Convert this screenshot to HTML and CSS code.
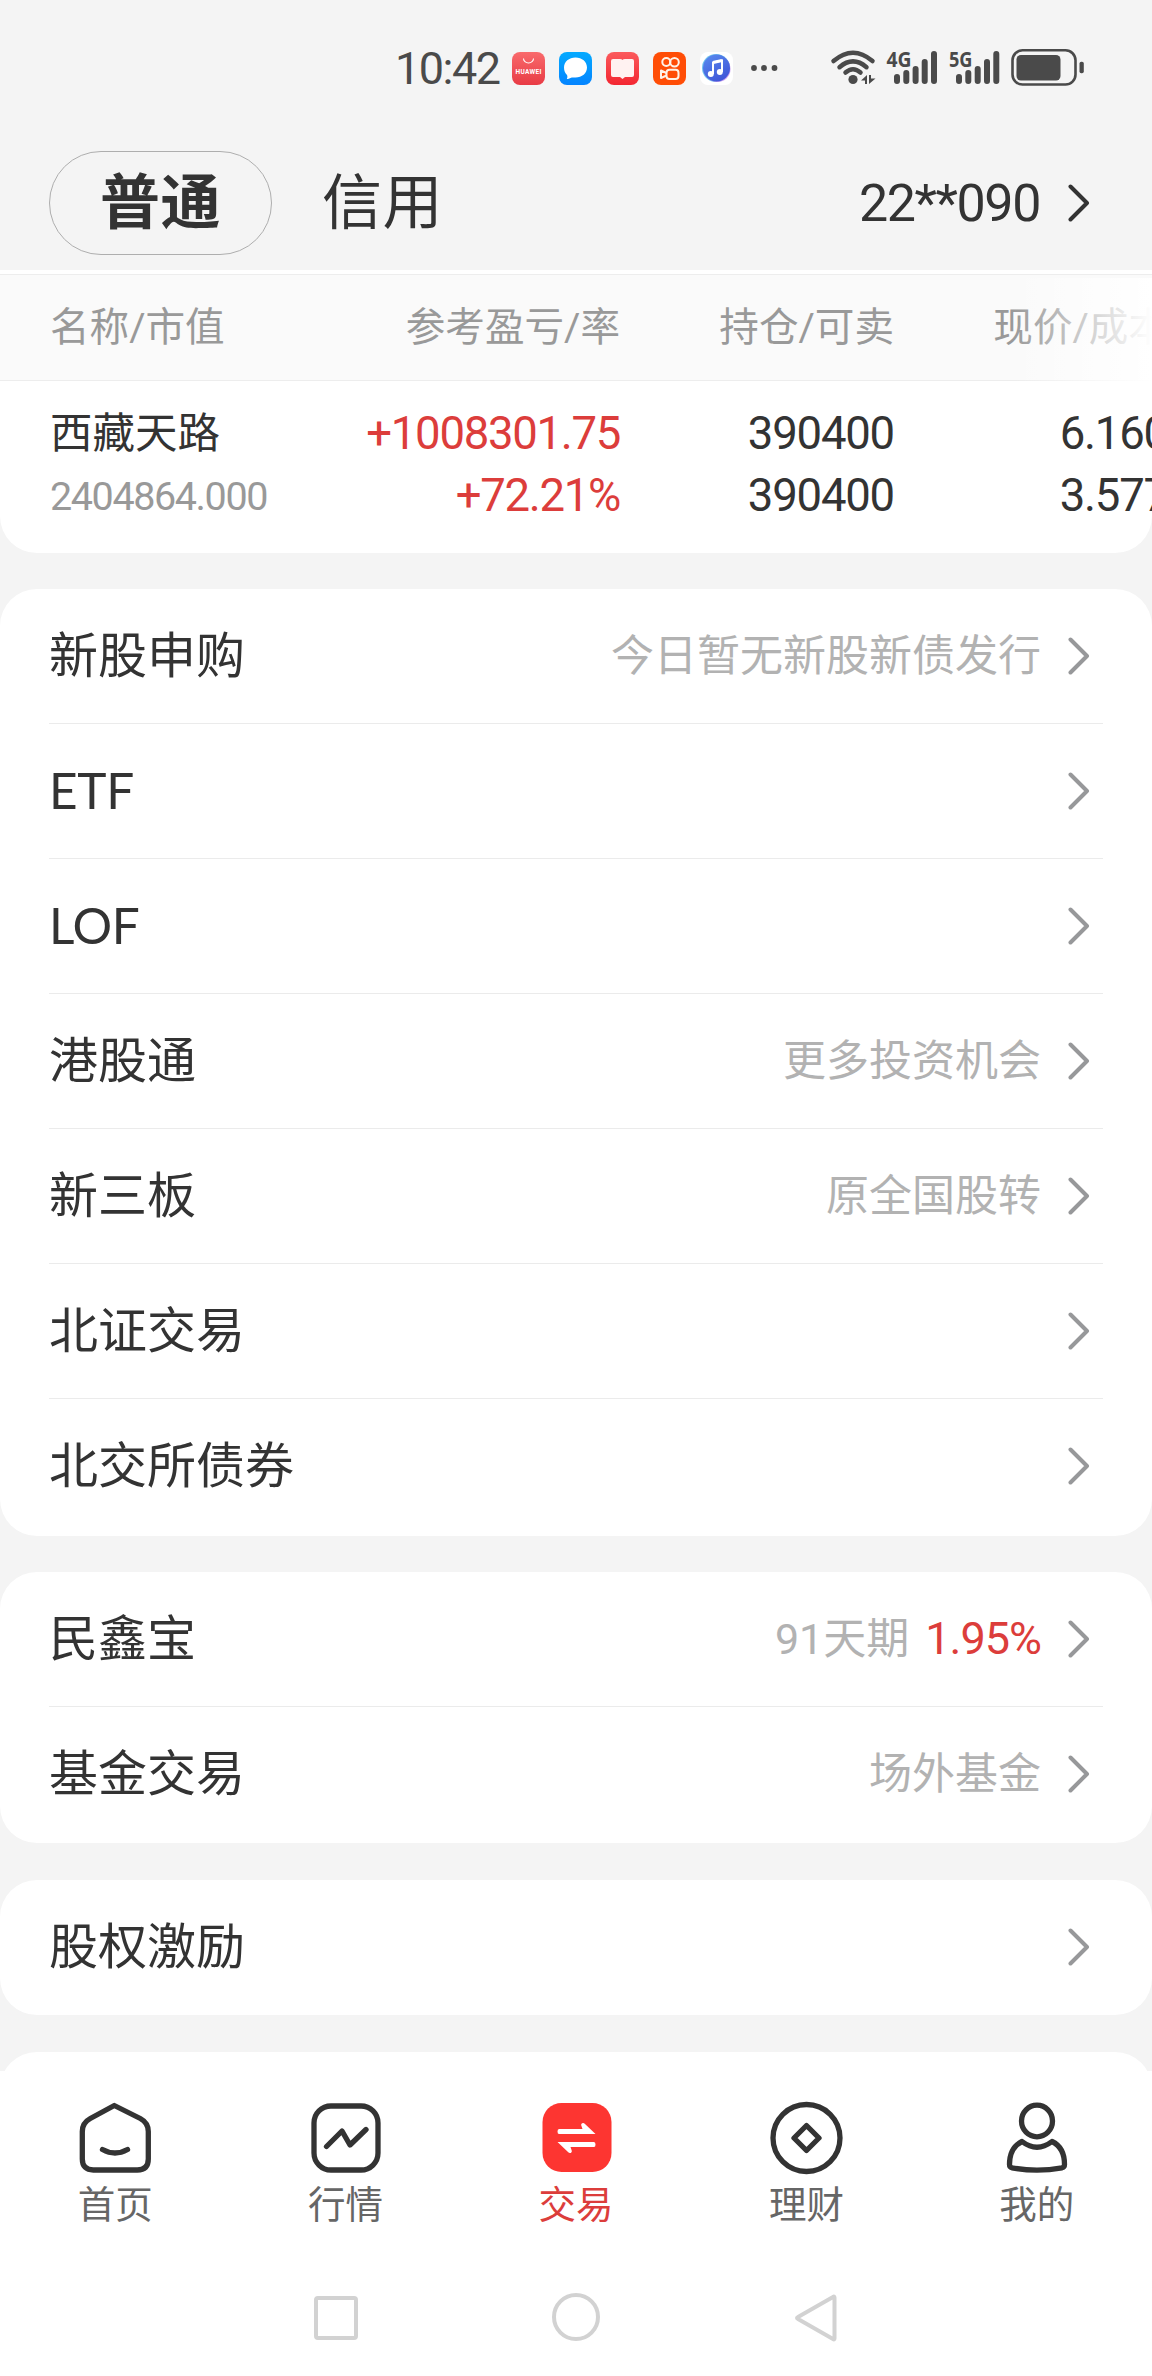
FILE: index.html
```html
<!DOCTYPE html>
<html lang="zh-CN">
<head>
<meta charset="utf-8">
<title>交易</title>
<link rel="stylesheet" href="styles.css">
</head>
<body>
<svg class="defs" width="0" height="0">
  <symbol id="chevron" viewBox="0 0 22 38"><path d="M2.5 2.5 19 19 2.5 35.5" fill="none" stroke="currentColor" stroke-width="4" stroke-linecap="round" stroke-linejoin="round"/></symbol>
</svg>
<div class="screen">
  <header class="status">
    <span class="time">10:42</span>
    <div class="apps">
      <svg width="33" height="33" viewBox="0 0 33 33"><defs><linearGradient id="ga" x2="0" y2="1"><stop stop-color="#f96a6c"/><stop offset="1" stop-color="#e83b45"/></linearGradient></defs><rect width="33" height="33" rx="8" fill="url(#ga)"/><path d="M11.5 6.500a5 4.500 0 0 0 10 0" fill="none" stroke="#fff" stroke-width="1.100"/><text x="16.500" y="21.500" class="brand" text-anchor="middle" textLength="26">HUAWEI</text></svg>
      <svg width="33" height="33" viewBox="0 0 33 33"><defs><linearGradient id="gb" x2="0" y2="1"><stop stop-color="#04aaff"/><stop offset="1" stop-color="#0484ff"/></linearGradient></defs><rect width="33" height="33" rx="8" fill="url(#gb)"/><path d="M16.500 5.500c6.500 0 11.500 4.300 11.500 10s-5 10-11.500 10c-2 0-3.500-.3-5 .500-1.500.800-2.700 1.200-3.700 1 .700-1.300.800-2.700.2-4C6.100 21.100 5 18.500 5 15.500c0-5.700 5-10 11.500-10z" fill="#fff"/></svg>
      <svg width="33" height="33" viewBox="0 0 33 33"><defs><linearGradient id="gc" x2="0" y2="1"><stop stop-color="#fb5a5c"/><stop offset="1" stop-color="#f32631"/></linearGradient></defs><rect width="33" height="33" rx="8" fill="url(#gc)"/><path d="M5 9q0-2 2-2h7q2 0 2.500 1Q17 7 19 7h7q2 0 2 2v14q0 2-2 2h-7l-2.500 2-2.500-2H7q-2 0-2-2z" fill="#fff2f1"/></svg>
      <svg width="33" height="33" viewBox="0 0 33 33"><rect width="33" height="33" rx="8" fill="#ff4d06"/><g fill="none" stroke="#fff3e8" stroke-width="2"><circle cx="13.300" cy="10" r="4"/><circle cx="21.500" cy="10.200" r="4.300"/><rect x="13.500" y="17.700" width="12" height="9.300" rx="3"/><path d="M13.500 21 8 18.500v7.500l5.500-2.500" stroke-linejoin="round"/></g></svg>
      <svg width="33" height="33" viewBox="0 0 33 33"><defs><linearGradient id="gd" x2=".6" y2="1"><stop stop-color="#5a8df0"/><stop offset="1" stop-color="#4057d8"/></linearGradient></defs><rect width="33" height="33" rx="8" fill="#fff"/><circle cx="16" cy="16" r="14" fill="#71c4ee"/><circle cx="17.500" cy="17" r="13" fill="#c79cf0"/><circle cx="16.500" cy="16" r="13.500" fill="url(#gd)"/><path d="M13 22V10.500l9-2V20" fill="none" stroke="#fff" stroke-width="2"/><path d="M13 10.500l9-2" stroke="#fff" stroke-width="3.200"/><circle cx="10.800" cy="22" r="3" fill="#fff"/><circle cx="19.800" cy="20" r="3" fill="#fff"/></svg>
    </div>
    <svg class="more" width="28" height="8" viewBox="0 0 28 8" fill="#4a4a4a"><circle cx="4" cy="4" r="2.900"/><circle cx="14" cy="4" r="2.900"/><circle cx="24.500" cy="4" r="2.900"/></svg>
    <svg class="signals" width="256" height="40" viewBox="830 48 256 40">
      <g fill="none" stroke="#4a4a4a" stroke-width="4.500" stroke-linecap="round">
        <path d="M833.500 61q19.500-16.500 39 0M839.500 67.200q13.500-11.500 27 0M845.500 72.500q7.500-6.500 15 0"/>
        <path stroke-width="6" d="M897 77v4M906.300 73v8M915.600 69v12M924.700 62v19M934 54v27M959 77v4M968.300 73v8M977.700 69v12M987 62v19M996.300 54v27"/>
        <rect x="1012.500" y="50.300" width="63" height="34.200" rx="10" stroke-width="2.600"/>
      </g>
      <g fill="#4a4a4a"><circle cx="853" cy="79.500" r="4.600"/><path d="M861 80.500 867 75v9h-2v-3.500zM869 75h2v3.500h4.500L869 84z"/><rect x="1016.500" y="55" width="44" height="25.500" rx="4.500"/><rect x="1079.500" y="61.700" width="4.300" height="11.600" rx="1.800"/>
      <text class="net" x="886.500" y="67" textLength="25" lengthAdjust="spacingAndGlyphs">4G</text><text class="net" x="949" y="67" textLength="23.500" lengthAdjust="spacingAndGlyphs">5G</text></g>
    </svg>
  </header>

  <nav class="accounts">
    <span class="tab active">普通</span>
    <span class="tab">信用</span>
    <span class="account num">22**090</span>
    <svg class="chev dark"><use href="#chevron"/></svg>
  </nav>

  <section class="holdings">
    <div class="cols head"><span>名称/市值</span><span>参考盈亏/率</span><span>持仓/可卖</span><span>现价/成本</span></div>
    <div class="cols body">
      <div class="cell"><span class="name">西藏天路</span><span class="num worth">2404864.000</span></div>
      <div class="cell num up"><span>+1008301.75</span><span class="pct">+72.21%</span></div>
      <div class="cell num"><span>390400</span><span>390400</span></div>
      <div class="cell num"><span>6.160</span><span>3.577</span></div>
    </div>
  </section>

  <main class="cards">
    <section class="card seven">
      <div class="row"><span class="label">新股申购</span><span class="hint">今日暂无新股新债发行</span><svg class="chev"><use href="#chevron"/></svg></div>
      <div class="row"><span class="latin">ETF</span><svg class="chev"><use href="#chevron"/></svg></div>
      <div class="row"><span class="latin">LOF</span><svg class="chev"><use href="#chevron"/></svg></div>
      <div class="row"><span class="label">港股通</span><span class="hint">更多投资机会</span><svg class="chev"><use href="#chevron"/></svg></div>
      <div class="row"><span class="label">新三板</span><span class="hint">原全国股转</span><svg class="chev"><use href="#chevron"/></svg></div>
      <div class="row"><span class="label">北证交易</span><svg class="chev"><use href="#chevron"/></svg></div>
      <div class="row"><span class="label">北交所债券</span><svg class="chev"><use href="#chevron"/></svg></div>
    </section>
    <section class="card two">
      <div class="row"><span class="label">民鑫宝</span><span class="hint"><span class="num">91</span>天期<b class="num rate">1.95%</b></span><svg class="chev"><use href="#chevron"/></svg></div>
      <div class="row"><span class="label">基金交易</span><span class="hint">场外基金</span><svg class="chev"><use href="#chevron"/></svg></div>
    </section>
    <section class="card one">
      <div class="row"><span class="label">股权激励</span><svg class="chev"><use href="#chevron"/></svg></div>
    </section>
    <section class="card peek"></section>
  </main>

  <nav class="tabbar">
    <a class="item"><svg width="76" height="76" viewBox="0 0 76 76"><path d="M38 5.500 64 18.500q8 4.300 8 13V59q0 11-11 11H17Q6 70 6 59V31.500q0-8.700 8-13z" transform="translate(-.7 0)"/><path d="M25.500 49.500q12.500 7 25 0"/></svg><span>首页</span></a>
    <a class="item"><svg width="76" height="76" viewBox="0 0 76 76"><rect x="6" y="6" width="64" height="64" rx="17"/><path d="M18.500 46.500 34 31l8 14L58 29.500"/></svg><span>行情</span></a>
    <a class="item on"><svg width="76" height="76" viewBox="0 0 76 76"><rect x="4.500" y="3" width="69" height="69" rx="19"/><g fill="#fff"><path d="M21 29h23.500l-1.200-3.500c-.8-2.500 2.200-3.500 3.700-1.500L57.500 34H21q-1.500 0-1.500-2.500T21 29z"/><path d="M56 47H32.500l1.200 3.500c.8 2.500-2.200 3.500-3.700 1.500L19.500 42H56q1.500 0 1.500 2.500T56 47z"/></g></svg><span>交易</span></a>
    <a class="item"><svg width="76" height="76" viewBox="0 0 76 76"><circle cx="38.500" cy="38" r="33.500"/><path d="M38.500 25.500 51 38 38.500 50.500 26 38z"/></svg><span>理财</span></a>
    <a class="item"><svg width="76" height="76" viewBox="0 0 76 76"><ellipse cx="38" cy="21" rx="15.500" ry="15.800"/><path d="M23 41.500q15 11.500 30 0 12.500 6 12.500 23 0 2.500-2.500 3.300-25 4.500-50 0-2.500-.8-2.500-3.300 0-17 12.500-23z"/></svg><span>我的</span></a>
  </nav>

  <footer class="sysnav">
    <svg width="50" height="50" viewBox="0 0 50 50"><rect x="5" y="5" width="40" height="40" rx="2"/></svg>
    <svg width="50" height="50" viewBox="0 0 50 50"><circle cx="25" cy="24" r="22"/></svg>
    <svg width="50" height="50" viewBox="0 0 50 50"><path d="M43.500 4.500v41q0 1.500-1.500.5L7 26q-2-1 0-2L42 4q1.500-1 1.500.5z"/></svg>
  </footer>
</div>
</body>
</html>
```
FILE: styles.css
```css
* { box-sizing: border-box; }
body { margin: 0; background: #f4f4f4; color: #333; font-family: Roboto, "Noto Sans CJK SC", sans-serif; }
.defs { display: block; }
.screen { width: 1152px; height: 2376px; overflow: hidden; display: flex; flex-direction: column; }
svg { display: block; flex: none; overflow: visible; }
span { white-space: nowrap; }

.status { height: 136px; padding-left: 395px; display: flex; align-items: flex-start; }
.time { width: 117px; margin-top: 42px; font-size: 45px; line-height: 54px; letter-spacing: -1.5px; color: #4a4a4a; }
.apps { display: flex; gap: 14px; margin-top: 52px; }
.brand { font: 700 6.5px Roboto, sans-serif; fill: #fff; }
.more { margin: 64px 0 0 17px; }
.signals { margin: 48px 0 0 52px; }
.net { font: 700 22px "Open Sans", sans-serif; }

.accounts { height: 134px; padding: 15px 62px 15px 49px; display: flex; align-items: center; }
.tab { font-size: 60px; line-height: 60px; letter-spacing: .5px; padding: 1px 0 0 50px; }
.tab.active { width: 223px; height: 104px; line-height: 101px; border: 1px solid #aeaeae; border-radius: 52px; font-weight: 700; }
.account { margin-left: auto; font-size: 52px; letter-spacing: -1.4px; }
.num { font-family: Roboto, "Noto Sans CJK SC", sans-serif; }
.chev { width: 22px; height: 38px; margin-left: 26px; color: #97989a; }
.chev.dark { color: #333; margin-left: 28px; }

.holdings { height: 283px; padding-top: 4px; background: #fff; border-radius: 0 0 37px 37px; overflow: hidden; }
.cols { width: 1168px; padding-left: 50px; display: grid; grid-template-columns: 297px 273px 274px 274px; text-align: right; }
.cols > :first-child { text-align: left; }
.head { position: relative; height: 107px; border: solid #ededed; border-width: 1px 0; background: #fafafa; color: #999; font-size: 39.6px; line-height: 105px; }
.head::after { content: ""; position: absolute; right: 16px; top: 3px; width: 140px; height: 103px; background: linear-gradient(90deg, #fff0, #fff); }
.body { padding-top: 22px; }
.cell { display: flex; flex-direction: column; font-size: 45.5px; line-height: 62px; letter-spacing: -1.2px; }
.name { font-size: 42.5px; letter-spacing: 0; }
.worth { font-size: 39.5px; line-height: 64px; letter-spacing: -1.4px; color: #999; }
.up { letter-spacing: -1.3px; padding-right: -1px; }
.up, .rate { color: #dc3d3b; }

.cards { display: flex; flex-direction: column; gap: 36px; padding-top: 36px; height: 1518px; overflow: hidden; }
.card { flex: none; display: flex; flex-direction: column; background: #fff; border-radius: 37px; padding: 0 49px; }
.seven { height: 947px; }
.two { height: 271px; margin-bottom: 1px; }
.one { height: 135px; margin-bottom: 1px; }
.peek { height: 135px; }
.row { height: 135px; display: flex; align-items: center; padding: 0 13px 0 0; font-size: 49px; line-height: 70px; }
.row:first-child { height: 134px; padding-bottom: 1px; }
.row + .row { border-top: 1px solid #ebebeb; }
.label { padding-top: 2px; }
.hint { margin-left: auto; font-size: 43px; color: #b2b2b2; }
.row > .chev { margin-left: auto; }
.row > .hint + .chev { margin-left: 27px; }
.latin { font-family: Lato, sans-serif; font-size: 49.5px; line-height: 66px; padding-bottom: 2px; letter-spacing: -.3px; }
.rate { font-weight: 400; margin-left: 16px; font-size: 45px; letter-spacing: -1px; }

.tabbar { height: 179px; padding-top: 29px; display: grid; grid-template-columns: repeat(5, 1fr); background: #fff; }
.item { display: flex; flex-direction: column; align-items: center; color: #666; font-size: 37.5px; line-height: 58px; }
.item svg { fill: none; stroke: #333; stroke-width: 5.3px; stroke-linecap: round; stroke-linejoin: round; }
.item.on { color: #dc3d3b; }
.item.on svg { fill: #fd3531; stroke: none; }

.sysnav { flex: 1; padding-top: 43px; background: #fff; display: flex; justify-content: center; gap: 190px; }
.sysnav svg { fill: none; stroke: #d2d2d2; stroke-width: 4px; stroke-linejoin: round; }
```
